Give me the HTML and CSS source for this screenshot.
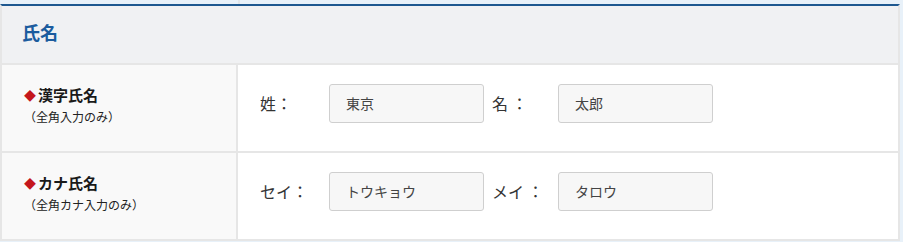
FILE: index.html
```html
<!DOCTYPE html>
<html lang="ja">
<head>
    <meta charset="UTF-8">
    <title>氏名</title>
    <link rel="stylesheet" href="styles.css">
</head>
<body>

<div class="form-wrap">
    <!-- end of previous table -->
    <div class="prev-row">
        <div class="prev-th"></div>
        <div class="prev-td"></div>
    </div>

    <div class="form-section">
        <h2 class="section-title">氏名</h2>

        <div class="form-row">
            <div class="form-th">
                <p class="th-title"><span class="mark">◆</span>漢字氏名</p>
                <p class="th-note">（全角入力のみ）</p>
            </div>
            <div class="form-td">
                <label class="field-label">姓：</label>
                <input class="field-input" type="text" value="東京">
                <label class="field-label second">名 ：</label>
                <input class="field-input" type="text" value="太郎">
            </div>
        </div>

        <div class="form-row">
            <div class="form-th">
                <p class="th-title"><span class="mark">◆</span>カナ氏名</p>
                <p class="th-note">（全角カナ入力のみ）</p>
            </div>
            <div class="form-td">
                <label class="field-label">セイ：</label>
                <input class="field-input" type="text" value="トウキョウ">
                <label class="field-label second">メイ ：</label>
                <input class="field-input" type="text" value="タロウ">
            </div>
        </div>
    </div>
</div>

</body>
</html>
```

FILE: styles.css
```css
/* Global */
body {
    margin: 0;
    padding: 0;
    background-color: #e8f1f9;
    font-family: 'Noto Sans CJK JP', 'Noto Sans', sans-serif;
    color: #333;
}
.form-wrap {
    width: 900px;
}

/* Previous table edge */
.prev-row {
    display: grid;
    grid-template-columns: 240px 1fr;
    height: 4px;
}
.prev-th {
    border-right: 2px solid #e2e6ea;
}

/* Section */
.form-section {
    border-top: 2px solid #1d5890;
    border-left: 2px solid #e6e6e6;
    border-right: 2px solid #e6e6e6;
    background-color: #fff;
}
.section-title {
    margin: 0;
    height: 57px;
    line-height: 53px;
    padding-left: 20px;
    font-size: 18px;
    font-weight: bold;
    color: #1b5c9e;
    background-color: #f0f1f3;
    border-bottom: 2px solid #e6e6e6;
}

/* Rows */
.form-row {
    display: grid;
    grid-template-columns: 236px 1fr;
    height: 86px;
    border-bottom: 2px solid #e6e6e6;
}
.form-th {
    background-color: #f9f9f9;
    border-right: 2px solid #e6e6e6;
    padding: 18px 0 0 22px;
}
.th-title {
    margin: 0;
    font-size: 15px;
    font-weight: bold;
    line-height: 23px;
    color: #1a1a1a;
}
.mark {
    color: #c4161c;
    font-size: 12px;
    margin-right: 2px;
}
.th-note {
    margin: 0;
    font-size: 12px;
    line-height: 20px;
    color: #222;
}
.form-td {
    display: flex;
    align-items: center;
    padding: 0 0 10px 22px;
}
.field-label {
    width: 67px;
    font-size: 16px;
}
.field-label.second {
    width: 64px;
    margin-left: 8px;
}
.field-input {
    box-sizing: border-box;
    width: 155px;
    height: 39px;
    margin-left: 2px;
    padding: 0 16px;
    font-family: inherit;
    font-size: 14px;
    color: #444;
    background-color: #f7f7f7;
    border: 1px solid #cfcfcf;
    border-radius: 3px;
}
```
